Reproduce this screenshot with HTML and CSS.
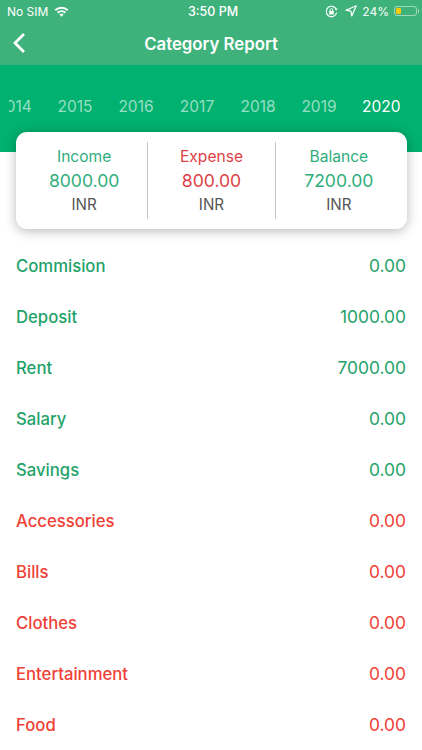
FILE: index.html
```html
<!DOCTYPE html>
<html>
<head>
  <meta charset="utf-8">
  <link rel="stylesheet" href="styles.css">
</head>
<body>
  <div class="top-bar">
    <div class="status-bar">
      <div class="status-left">
        <span>No SIM</span>
        <svg class="wifi" width="15" height="11" viewBox="0 0 15 11">
          <path d="M0.6 3.6a10 10 0 0 1 13.8 0l-1.3 1.4a8.1 8.1 0 0 0-11.2 0z" fill="#fff"/>
          <path d="M3 6.1a6.6 6.6 0 0 1 9 0l-1.3 1.4a4.7 4.7 0 0 0-6.4 0z" fill="#fff"/>
          <path d="M5.4 8.5a3.1 3.1 0 0 1 4.2 0l-2.1 2.2z" fill="#fff"/>
        </svg>
      </div>
      <div class="status-time">3:50 PM</div>
      <div class="status-right">
        <svg width="13" height="13" viewBox="0 0 13 13">
          <path d="M11.6 7.6a5.2 5.2 0 1 1-.3-3.2" fill="none" stroke="#fff" stroke-width="1.2"/>
          <path d="M12.6 3.2l-1 2.4-1.9-1.4z" fill="#fff"/>
          <rect x="4.2" y="6" width="4.6" height="3.4" rx=".5" fill="#fff"/>
          <path d="M5.2 6V4.9a1.3 1.3 0 0 1 2.6 0V6" fill="none" stroke="#fff" stroke-width=".9"/>
        </svg>
        <svg class="arrow" width="12" height="12" viewBox="0 0 12 12">
          <path d="M11.2.8L1 5.2l4.9.9.9 4.9z" fill="none" stroke="#fff" stroke-width="1.2" stroke-linejoin="round"/>
        </svg>
        <span>24%</span>
        <div class="battery"><div class="battery-level"></div></div>
        <div class="battery-tip"></div>
      </div>
    </div>
    <div class="nav-bar">
      <svg class="back" width="14" height="22" viewBox="0 0 14 22">
        <path d="M12 2L3 11l9 9" fill="none" stroke="#fff" stroke-width="2.8"/>
      </svg>
      <div class="nav-title">Category Report</div>
    </div>
  </div>

  <div class="year-band">
    <div class="years">
      <span class="year">2014</span>
      <span class="year">2015</span>
      <span class="year">2016</span>
      <span class="year">2017</span>
      <span class="year">2018</span>
      <span class="year">2019</span>
      <span class="year active">2020</span>
    </div>
  </div>

  <div class="summary">
    <div class="summary-col">
      <div class="summary-label green">Income</div>
      <div class="summary-value green">8000.00</div>
      <div class="summary-unit">INR</div>
    </div>
    <div class="summary-col">
      <div class="summary-label red">Expense</div>
      <div class="summary-value red">800.00</div>
      <div class="summary-unit">INR</div>
    </div>
    <div class="summary-col">
      <div class="summary-label green">Balance</div>
      <div class="summary-value green">7200.00</div>
      <div class="summary-unit">INR</div>
    </div>
  </div>

  <div class="rows">
    <div class="row income"><span>Commision</span><span class="amount">0.00</span></div>
    <div class="row income"><span>Deposit</span><span class="amount">1000.00</span></div>
    <div class="row income"><span>Rent</span><span class="amount">7000.00</span></div>
    <div class="row income"><span>Salary</span><span class="amount">0.00</span></div>
    <div class="row income"><span>Savings</span><span class="amount">0.00</span></div>
    <div class="row expense"><span>Accessories</span><span class="amount">0.00</span></div>
    <div class="row expense"><span>Bills</span><span class="amount">0.00</span></div>
    <div class="row expense"><span>Clothes</span><span class="amount">0.00</span></div>
    <div class="row expense"><span>Entertainment</span><span class="amount">0.00</span></div>
    <div class="row expense"><span>Food</span><span class="amount">0.00</span></div>
  </div>
</body>
</html>
```

FILE: styles.css
```css
html, body {
  height: 750px;
  overflow: hidden;
}

body {
  margin: 0;
  padding: 0;
  background: #fff;
  font-family: Inter, "Liberation Sans", sans-serif;
}

.top-bar {
  height: 65px;
  background: #3eb27a;
  color: #fff;
}

.status-bar {
  height: 22px;
  padding: 0 3px 0 7px;
  display: flex;
  align-items: center;
  justify-content: space-between;
  font-size: 12px;
  position: relative;
}

.status-left,
.status-right {
  display: flex;
  align-items: center;
  gap: 6px;
}

.status-time {
  font-size: 12.5px;
  font-weight: 500;
  position: absolute;
  left: 4px;
  right: 0;
  text-align: center;
}

.status-right {
  gap: 5px;
}

.arrow {
  margin-left: 2px;
}

.battery {
  width: 23px;
  height: 10px;
  box-sizing: border-box;
  border: 1px solid rgba(255,255,255,0.5);
  border-radius: 3px;
  padding: 1px;
  margin-right: -4px;
}

.battery-level {
  width: 5px;
  height: 100%;
  background: #f6c90e;
  border-radius: 1px;
}

.battery-tip {
  width: 1px;
  height: 4px;
  background: rgba(255,255,255,0.5);
}

.nav-bar {
  height: 43px;
  display: flex;
  align-items: center;
  justify-content: center;
  position: relative;
}

.back {
  position: absolute;
  left: 12px;
  top: 10px;
}

.nav-title {
  font-size: 16.8px;
  font-weight: 600;
}

.year-band {
  height: 87px;
  background: #00b16f;
  overflow: hidden;
}

.years {
  display: flex;
  margin: 32px 0 0 9px;
  overflow: hidden;
  font-size: 15.5px;
  color: rgba(255,255,255,0.6);
}

.year {
  width: 36px;
  margin-right: 25px;
  text-align: center;
  flex-shrink: 0;
}

.year:first-child {
  margin-left: -13px;
}

.year.active {
  color: #fff;
}

.summary {
  width: 391px;
  height: 97px;
  margin: -20px 0 0 16px;
  box-sizing: border-box;
  padding: 10px 5px;
  display: flex;
  background: #fff;
  border-radius: 11px;
  box-shadow: 0 2px 12px rgba(0,0,0,0.28);
  position: relative;
}

.summary-col {
  flex: 1;
  padding-top: 2px;
  text-align: center;
  border-left: 1px solid #c8c8c8;
}

.summary-col:first-child {
  border-left: none;
}

.summary-label {
  font-size: 15.6px;
  line-height: 26px;
}

.summary-value {
  font-size: 17.6px;
  line-height: 22px;
}

.summary-unit {
  font-size: 15.2px;
  line-height: 26px;
  color: #555;
}

.green {
  color: #2fae7d;
}

.red {
  color: #dd3f46;
}

.rows {
  margin-top: 11px;
  padding: 0 16px;
}

.row {
  height: 51px;
  display: flex;
  align-items: center;
  justify-content: space-between;
  font-size: 16.7px;
  font-weight: 500;
}

.row .amount {
  font-size: 17.4px;
  font-weight: 400;
}

.income {
  color: #1fa26a;
}

.expense {
  color: #ef4036;
}
```
